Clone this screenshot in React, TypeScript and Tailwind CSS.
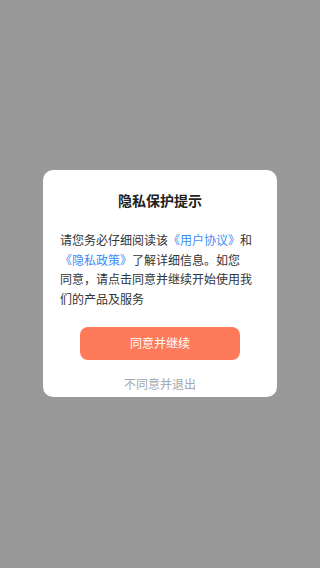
const font = { fontFamily: '"Noto Sans CJK SC", "Noto Sans", sans-serif' };

export default function App() {
  return (
    <div
      className="flex h-[568px] w-[320px] items-start justify-center bg-[#999999] pt-[170px]"
      style={font}
    >
      <div className="flex w-[234px] flex-col items-center rounded-[10px] bg-white pb-[5px] pt-[20px]">
        <h2 className="text-[14px] font-bold leading-[20px] text-[#222222]">隐私保护提示</h2>
        <p className="mt-[20px] w-[200px] whitespace-nowrap text-[12px] leading-[19.7px] text-[#333333]">
          请您务必仔细阅读该<span className="text-[#3d8ef7]">《用户协议》</span>和
          <br />
          <span className="text-[#3d8ef7]">《隐私政策》</span>了解详细信息。如您
          <br />
          同意，请点击同意并继续开始使用我
          <br />
          们的产品及服务
        </p>
        <button className="mt-[18px] flex h-[33px] w-[160px] items-center justify-center rounded-[8px] bg-[#ff7a5a] text-[12px] text-white">
          同意并继续
        </button>
        <button className="mt-[16px] text-[12px] leading-[16px] text-[#a3a7ad]">不同意并退出</button>
      </div>
    </div>
  );
}
